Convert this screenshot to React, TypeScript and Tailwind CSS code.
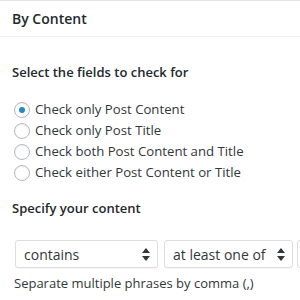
import React from "react";

function Radio({ checked, label }: { checked?: boolean; label: string }) {
  return (
    <label className="flex items-center h-[21px]">
      <span className="ml-[14px] mr-[5px] w-[16px] h-[16px] rounded-full border border-[#b4b9be] bg-white flex items-center justify-center shadow-[inset_0_1px_2px_rgba(0,0,0,0.07)]">
        {checked && <span className="w-[6px] h-[6px] rounded-full bg-[#1e8cbe]" />}
      </span>
      <span className="text-[13.2px] text-[#32373c]">{label}</span>
    </label>
  );
}

function Select({ value, className }: { value: string; className: string }) {
  return (
    <div className={`h-[28px] border border-[#ddd] rounded-[3px] bg-white flex items-center justify-between pl-[8px] pr-[7px] shadow-[0_1px_1px_rgba(0,0,0,0.04)] ${className}`}>
      <span className="text-[14px] text-[#32373c]">{value}</span>
      <svg width="8" height="13" viewBox="0 0 8 13">
        <path d="M4 0 L8 5 L0 5 Z" fill="#32373c" />
        <path d="M0 8 L8 8 L4 13 Z" fill="#32373c" />
      </svg>
    </div>
  );
}

export default function App() {
  return (
    <div className="w-[300px] h-[300px] bg-white overflow-hidden border-t border-[#e5e5e5]" style={{ fontFamily: '"Open Sans", "Noto Sans", sans-serif' }}>
      <div className="h-[36px] border-b border-[#eee] flex items-center pl-[12px]">
        <span className="text-[14px] font-semibold text-[#23282d]">By Content</span>
      </div>
      <div className="pt-[26px] pl-[12px] text-[13px] font-semibold text-[#23282d] leading-[18px]">Select the fields to check for</div>
      <div className="mt-[18px] flex flex-col">
        <Radio checked label="Check only Post Content" />
        <Radio label="Check only Post Title" />
        <Radio label="Check both Post Content and Title" />
        <Radio label="Check either Post Content or Title" />
      </div>
      <div className="mt-[16px] pl-[12px] text-[13px] font-semibold text-[#23282d] leading-[18px]">Specify your content</div>
      <div className="mt-[23px] flex items-center pl-[15px]">
        <Select value="contains" className="w-[143px] shrink-0" />
        <Select value="at least one of" className="w-[129px] shrink-0 ml-[6px]" />
        <div className="w-[20px] h-[28px] border border-[#ddd] rounded-[3px] shrink-0 ml-[4px]" />
      </div>
      <div className="mt-[5px] pl-[14px] text-[13px] text-[#32373c] leading-[20px]">Separate multiple phrases by comma (,)</div>
    </div>
  );
}
